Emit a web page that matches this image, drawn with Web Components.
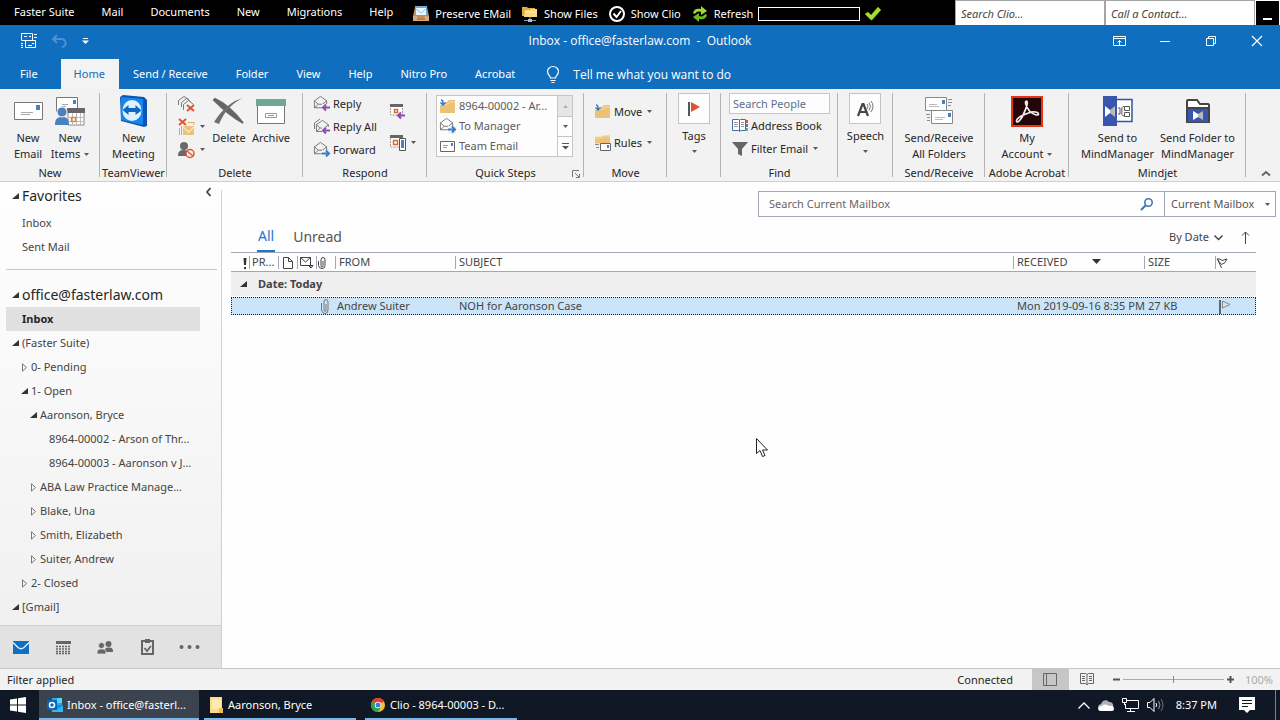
<!DOCTYPE html>
<html lang="en">
<head>
<meta charset="utf-8">
<title>Inbox - office@fasterlaw.com - Outlook</title>
<style>
html, body { height: 100%; margin: 0; }
body { font: 11px/16px "Noto Sans", "Open Sans", sans-serif; color: #262626; background: #fefefe; }
</style>
</head>
<body>
<mail-app></mail-app>
<script>
const shared = `
*, *::before, *::after { box-sizing: border-box; }
button, input, select { font: inherit; color: inherit; border: 0; margin: 0; padding: 0; background: none; border-radius: 0; outline: 0; white-space: nowrap; }
button { display: flex; align-items: center; }
input::placeholder { color: inherit; opacity: 1; }
a { color: inherit; text-decoration: none; }
`;
function define(name, css, html) {
  customElements.define(name, class extends HTMLElement {
    connectedCallback() {
      if (this.shadowRoot) return;
      const t = document.createElement('template');
      t.innerHTML = `<style>${shared}${css}</style>` + (typeof html === 'function' ? html(this) : html);
      this.attachShadow({ mode: 'open' }).append(document.importNode(t.content, true));
    }
  });
}

const flap = '<path d="M.5 5.500 7.500.500l7 5v8H.500zM.500 5.500l4.500 4h5l4.500-4M.500 13.500l4.500-4M14.500 13.500l-4.500-4" fill="none" stroke="#6a6a6a"/>';
const folder = '<path d="M0 3h7l2-2h6v13H0z" fill="#edc277"/><path d="M0 5h8l2-2h5" fill="none" stroke="#f8dca8"/>';
const icons = {
  tray: [16,16,'<path d="M2 1h12l2 9v5H0v-5z" fill="#c58b53"/><path d="M2 0h12v9H2z" fill="#6fa9d8"/><path d="M3 2h10v7H3z" fill="#eef6fc"/><path d="m3 3 5 4 5-4" fill="none" stroke="#8cc0ea"/><path d="M0 10h4l1 2h6l1-2h4v5H0z" fill="#dba873"/><path d="M4 13h8" stroke="#8a5a2d"/>'],
  showfiles: [16,16,'<path d="M0 1h5l1 1h7v8H0z" fill="#e3a93d"/><path d="M3 4h5l1-1h6v8H2z" fill="#ffd982"/><path d="M3 6h12" stroke="#fff0c4"/><path d="M8 11v3M2 14.500h12" stroke="#7f9fc0"/><path d="M6 13h4v3H6z" fill="#a8bfd8"/>'],
  clio: [16,16,'<circle cx="8" cy="8" r="7" fill="none" stroke="#fff" stroke-width="2"/><path d="m4.500 7.500 3 3.500 4.500-6" fill="none" stroke="#fff" stroke-width="2"/>'],
  refresh: [16,16,'<path d="M1 7c1-4 4-5 8-4V0l6 5-6 4V6C6 5 4 6 3 8z" fill="#9ddc2c"/><path d="M15 9c-1 4-4 5-8 4v3l-6-5 6-4v3c3 1 5 0 6-2z" fill="#72b81c"/>'],
  check: [16,14,'<path d="m0 7 3-2 3 3 7-8 3 3-9 10H6z" fill="#a4e02f" stroke="#5c9a12" stroke-width=".6"/>'],
  minus: [9,3,'<path d="M0 1h9v2H0z" fill="#fff"/>'],
  sr: [16,16,'<g fill="none" stroke="#fff"><path d="M.5.5h11v7H.5zM4.500 7.500h10v7h-10z" /><path d="M13 1.500h3M13 4.500h3M0 10.500h2M0 12.500h2M0 14.500h2M3 3.500h3M7 12.500h4"/></g><path d="M5 8h9v6H5z" fill="#106ebe"/><path d="M7 12.500h4M11 10.500h2M8 3.500h2" stroke="#fff"/>'],
  undo: [15,14,'<path d="M5 1 1 5l4 4M1 5h8c6 0 6 7 1 8" fill="none" stroke="#4a92d1" stroke-width="2"/>'],
  qat: [7,6,'<path d="M1 .5h5" stroke="#fff"/><path d="M0 2.500h7L3.500 6z" fill="#fff"/>'],
  ropts: [13,10,'<path d="M.5.5h12v9H.5zM.5 2.500h12M6.500 9V4.500M4.500 6.500l2-2 2 2" fill="none" stroke="#fff"/>'],
  min: [10,1,'<path d="M0 .5h10" stroke="#fff"/>'],
  restore: [10,10,'<path d="M.5 2.500h7v7h-7zM2.500 2.500v-2h7v7h-2" fill="none" stroke="#fff"/>'],
  close: [10,10,'<path d="m0 0 10 10M10 0 0 10" stroke="#fff" stroke-width="1.200"/>'],
  bulb: [12,17,'<path d="M3.500 12c0-2-3-3-3-6.500a5.500 5 0 0 1 11 0c0 3.500-3 4.500-3 6.500zM3.500 14.500h5M4.500 16.500h3" fill="none" stroke="#fff" stroke-width="1.200"/>'],
  newmail: [29,18,'<path d="M.5.5h28v17H.5z" fill="#fff" stroke="#777"/><path d="M22 3h4v5h-4z" fill="#4a80bd"/><path d="M7 10.500h12M7 12.500h9" stroke="#aaa"/>'],
  newitems: [30,29,'<path d="M1.500.5h21v14h-21z" fill="#fff" stroke="#777"/><path d="M18 3h3v4h-3z" fill="#4a80bd"/><path d="M7 7.500h6M7 9.500h4" stroke="#aaa"/><path d="M13 12h16v16H13z" fill="#fff" stroke="#888"/><path d="M12 11h18v5H12z" fill="#666"/><path d="M14 20.500h15M14 24.500h15M17.500 16v12M21.500 16v12M25.500 16v12" stroke="#bbb"/><path d="M16.500 20.500h4v4h-4z" fill="none" stroke="#e08a4a" stroke-width="1.500"/><path d="M0 28c0-7 3-8 7-8s7 1 7 8z" fill="#4a80bd"/><circle cx="7" cy="15" r="5" fill="#4a80bd" stroke="#f2f2f2"/>'],
  teamviewer: [27,32,'<path d="M0 2 3 0l21 2 3 3v26l-3 1L1 26z" fill="#0a55b5"/><path d="m1 2 22 2v26L1 25z" fill="#1686ee"/><ellipse cx="12" cy="15.500" rx="9.500" ry="10.500" fill="#dff1ff"/><path d="m2.500 15 6-5v3h7v-3l6 5.500-6 4.500v-3h-7v3z" fill="#0c68c8"/>'],
  ignore: [17,16,'<path d="M.5 9V4.500L6 .5l5 3M3.500 11V6.500l5-4 4 3M5.500 14V8.500l5-4 5 4" fill="none" stroke="#7a7a7a"/><path d="m9 9 7 6M16 9l-7 6" stroke="#e0562c" stroke-width="2"/>'],
  cleanup: [17,16,'<path d="M5 7h11v9H5z" fill="#edc277"/><path d="m5 8 5.500 5L16 8" fill="none" stroke="#fbe6bd" stroke-width="1.300"/><path d="M1.500 9v7M3.500 7v9M10 3.500h6V6" fill="none" stroke="#e0a95a"/><path d="m1 0 7 6M8 0 1 6" stroke="#e0562c" stroke-width="2"/>'],
  junk: [17,16,'<circle cx="6" cy="4" r="4" fill="#6a6a6a"/><path d="M0 14c0-5 2-6 6-6 3 0 4 1 4 2v4z" fill="#6a6a6a"/><circle cx="12" cy="11.500" r="4" fill="#f2f2f2" stroke="#e0562c" stroke-width="1.500"/><path d="m9 9 6 5" stroke="#e0562c" stroke-width="1.500"/>'],
  delete: [30,26,'<path d="M1 1c9 4 20 14 28 24C17 18 8 10 0 2z" fill="#666" stroke="#666" stroke-width="2"/><path d="M29 0C18 5 10 14 5 26L0 24C8 12 17 3 29 0z" fill="#6e6e6e"/>'],
  archive: [30,25,'<path d="M1.500 5.500h27v19h-27z" fill="#fff" stroke="#777"/><path d="M0 0h30v7H0z" fill="#6fa794"/><path d="M9.500 14.500h11v4h-11z" fill="none" stroke="#999"/><path d="M12 16.500h6" stroke="#999"/>'],
  reply: [16,16,`<g transform="scale(.87)">${flap}</g><path d="M8 8h8v8H8z" fill="#f2f2f2"/><path d="M9 11.500h7M12 8.500l-3 3 3 3" fill="none" stroke="#8c4fb0" stroke-width="2"/>`],
  replyall: [16,16,`<path d="M.5 10V4L6 0" fill="none" stroke="#777"/><g transform="translate(2 1) scale(.85)">${flap}</g><path d="M8 8h8v8H8z" fill="#f2f2f2"/><path d="M9 11.500h7M12 8.500l-3 3 3 3" fill="none" stroke="#8c4fb0" stroke-width="2"/>`],
  forward: [16,16,`<g transform="scale(.87)">${flap}</g><path d="M8 8h8v8H8z" fill="#f2f2f2"/><path d="M8 11.500h7M12 8.500l3 3-3 3" fill="none" stroke="#3f7cc0" stroke-width="2"/>`],
  meeting: [16,15,'<path d="M.5 1h12v10H.5z" fill="#fff" stroke="#999" stroke-dasharray="2 1"/><path d="M0 0h13v3H0z" fill="#666"/><path d="M4.500 5.500h3v3h-3z" fill="none" stroke="#e0662c" stroke-width="1.500"/><path d="M8 11.500h7M11 8.500l-3 3 3 3" fill="none" stroke="#8c4fb0" stroke-width="2"/>'],
  im: [16,16,'<path d="M.5 1h12v11H.5z" fill="#fff" stroke="#999" stroke-dasharray="2 1"/><path d="M0 0h13v3H0z" fill="#666"/><path d="M3.500 5.500h4v4h-4z" fill="none" stroke="#e0662c" stroke-width="1.500"/><path d="M9.500 3.500h6v12h-6z" fill="#fff" stroke="#555"/><path d="M11 5h3v8h-3z" fill="#4a80bd"/>'],
  movefolder: [16,15,`${folder}<path d="M0 0h5v6H0z" fill="#f7f7f7"/><path d="M1 1c2 0 2 1 2 5M.5 3.500 3 6l2.500-2.500" fill="none" stroke="#2f7cc2" stroke-width="1.500"/>`],
  rules: [16,16,`<g transform="scale(1 .6)">${folder}</g><path d="M5.500 8.500h10v7h-10z" fill="#fff" stroke="#666"/><path d="M12 10h2v3h-2z" fill="#4a80bd"/><path d="M0 9.500h4M1 12.500h3" stroke="#888"/>`],
  teammail: [15,11,'<path d="M.5.5h14v10H.5z" fill="#fff" stroke="#666"/><path d="M11 2h2v3h-2z" fill="#4a80bd"/><path d="M3 4.500h5M3 6.500h4" stroke="#999"/>'],
  flag: [12,14,'<path d="M1 0v14" stroke="#555" stroke-width="2"/><path d="m3 0 9 5-9 5z" fill="#dd5530"/>'],
  book: [16,14,'<path d="M0 1h14v11H0z" fill="#fff"/><path d="M.5.500h6q1 0 1 1 0-1 1-1h5v11h-5q-1 0-1 1 0-1-1-1h-6zM7.500 1v12" fill="none" stroke="#3f6fa8"/><path d="M2 3.500h4M2 5.500h4M2 7.500h4M9 3.500h3M9 5.500h3M9 7.500h3" stroke="#999"/><path d="M15 1v3" stroke="#dd5530" stroke-width="2"/><path d="M15 5v3" stroke="#4a80bd" stroke-width="2"/><path d="M15 9v3" stroke="#6fa794" stroke-width="2"/>'],
  filter: [16,14,'<path d="M0 0h16l-6 7v7l-4-2V7z" fill="#666"/>'],
  sound: [17,16,'<path d="m1 15 4.500-12h1L11 15M3 11h6" fill="none" stroke="#444" stroke-width="2.200"/><path d="M10 3q2 2 0 5M12 1.500q3 3.500 0 8M14 0q4 5 0 11" fill="none" stroke="#777"/>'],
  sendrecv: [28,28,'<path d="M.5.5h21v13H.5zM6.500 13.500h21v13h-21z" fill="#fff" stroke="#888"/><path d="M17 3h3v4h-3zM23 16h3v4h-3z" fill="#4a80bd"/><path d="M4 7.500h8M4 9.500h10M10 20.500h10M10 22.500h8" stroke="#bbb"/><path d="M23 2.500h4M23 5.500h4M23 8.500h3M1 17.500h4M2 20.500h3M2 23.500h3" stroke="#8a8a8a"/>'],
  acrobat: [32,31,'<path d="M1 1h30v29H1z" fill="#250608" stroke="#e63312" stroke-width="2"/><path d="M15.500 5c-2 0-1 5 3 10 4 4 9 5 9 3s-5-3-10-1c-6 2-12 5-12 8s5-1 7-7c3-6 5-13 3-13z" fill="none" stroke="#f3eeee" stroke-width="1.700"/>'],
  mindsend: [30,30,'<path d="M13 3.500h16v22H13z" fill="#fff" stroke="#3553a4" stroke-width="1.500"/><path d="M0 0h14v30H0z" fill="#3956ae"/><path d="m2 10 5 4v3l-5 4z" fill="#fff"/><path d="m12 10-5 4v3l5 4z" fill="#bbb"/><path d="M15 12h2v6h-2M21 10.500q-3 0-2 4.500-1 5 2 5M21.500 10.500h5v4h-5zM21.500 16.500h5v4h-5z" fill="none" stroke="#555"/>'],
  mindfolder: [24,25,'<path d="M1 23V2q0-1 1-1h9l3 4h8q1 0 1 1v17z" fill="#fff" stroke="#444" stroke-width="2"/><path d="M2 10h20v13H2z" fill="#3956ae"/><path d="M1 9h22" stroke="#444" stroke-width="2"/><path d="m7 12 5 3v3l-5 3z" fill="#fff"/><path d="m17 12-5 3v3l5 3z" fill="#bbb"/>'],
  caret: [5,3,'<path d="M0 0h5L2.500 3z" fill="#5a5a5a"/>'],
  caretup: [5,3,'<path d="M0 3h5L2.500 0z" fill="#b0b0b0"/>'],
  more: [7,7,'<path d="M0 .5h7" stroke="#555"/><path d="M0 3h7L3.500 6.500z" fill="#555"/>'],
  launch: [8,8,'<path d="M.5 7V.5H7M3 3l4 4M7.500 4v3.500H4" fill="none" stroke="#777"/>'],
  collapse: [8,5,'<path d="m0 4.500 4-3.500 4 3.500" fill="none" stroke="#666" stroke-width="2"/>'],
  left: [5,8,'<path d="M4.500 0 1 4l3.500 4" fill="none" stroke="#444" stroke-width="1.800"/>'],
  open: [7,6,'<path d="M7 0v6H0z" fill="#333"/>'],
  shut: [6,9,'<path d="m1.500.800 4 3.700-4 3.700z" fill="none" stroke="#777"/>'],
  search: [14,13,'<circle cx="8.500" cy="4.500" r="3.700" fill="none" stroke="#3c78b8" stroke-width="1.600"/><path d="M5.500 7.500 1 12" stroke="#3c78b8" stroke-width="2.200"/>'],
  chev: [9,5,'<path d="m.5.500 4 4 4-4" fill="none" stroke="#444" stroke-width="1.500"/>'],
  arrow: [9,13,'<path d="M4.500 13V1M1 4.500l3.500-3.500L8 4.500" fill="none" stroke="#444"/>'],
  sort: [9,5,'<path d="M0 0h9L4.500 5z" fill="#333"/>'],
  bang: [4,11,'<path d="M.5 0h3L3 7H1zM1 9h2v2H1z" fill="#333"/>'],
  doc: [10,12,'<path d="M.5.5h5l4 4v7h-9zM5.500.5v4h4" fill="none" stroke="#444"/>'],
  mailadd: [13,12,'<path d="M8 8.500H.5v-8h10V6M.5.500l5 4.500 5-4.500" fill="none" stroke="#444"/><path d="M8 8.500h5M10.500 6v3.500M8.500 8.500l2.500 2.500 2-2.500" fill="none" stroke="#333"/>'],
  clip: [8,12,'<path d="M5 4v4.500q0 1.500-1 1.500T3 8.500V3q0-2.500 2-2.500T7 3v5.500Q7 11.500 4 11.500T.5 8.500V4" fill="none" stroke="#444"/>'],
  bigclip: [8,15,'<path d="M5 5v6q0 1.500-1 1.500T3 11V3q0-2.500 2-2.500T7 3v8q0 3.500-3 3.500T.5 11V4" fill="none" stroke="#777"/>'],
  flaghead: [10,10,'<path d="M0 1h3l2 1.500L10 1 8 4.500 4.500 6.500zM.5 1 4.500 10" fill="none" stroke="#444"/>'],
  flagrow: [12,14,'<path d="M1 0v14" stroke="#666" stroke-width="2"/><path d="m3.500 1 7.500 3.500L3.500 8z" fill="none" stroke="#888"/>'],
  mail: [16,13,'<path d="M0 0h16v13H0z" fill="#0f6fc5"/><path d="m0 1.500 5 5q3 2.500 6 0l5-5" fill="none" stroke="#e9f3fb" stroke-width="1.300"/>'],
  calendar: [15,13,'<path d="M0 0h15v3H0z" fill="#666"/><path d="M0 5.500h15M0 8h15M0 10.500h15M0 12.500h15" stroke="#666" stroke-width="1.500" stroke-dasharray="2 1"/>'],
  people: [16,13,'<g fill="#666"><circle cx="11.500" cy="3" r="3"/><path d="M8 10c0-3 1-3.500 4-3.500s4 1 4 4.500H8z"/></g><g fill="#666" stroke="#e3e3e3" stroke-width=".8"><circle cx="4.500" cy="4.500" r="3"/><path d="M0 13c0-4 1-5 4.500-5S9 9 9 13z"/></g>'],
  tasks: [13,16,'<path d="M1 2h11v13H1z" fill="none" stroke="#666" stroke-width="2"/><path d="M4 0h5v4H4z" fill="#666"/><path d="m3.500 9 2.500 3 4-5" fill="none" stroke="#666" stroke-width="1.800"/>'],
  dots: [21,4,'<g fill="#666"><circle cx="2.500" cy="2" r="2"/><circle cx="10.500" cy="2" r="2"/><circle cx="18.500" cy="2" r="2"/></g>'],
  viewnormal: [14,13,'<path d="M.5.5h13v12H.5zM3.500 1v11" fill="none" stroke="#666"/>'],
  viewread: [14,13,'<path d="M.5.500h5l1.500 1 1.500-1h5v10h-5L7 12l-1.500-1.500h-5zM7 1.500V12" fill="none" stroke="#666"/><path d="M2 3.500h3M2 5.500h3M2 7.500h3M9 3.500h3M9 5.500h3M9 7.500h3" stroke="#666"/>'],
  zoomout: [7,3,'<path d="M0 1.500h7" stroke="#555" stroke-width="2"/>'],
  zoomin: [7,7,'<path d="M0 3.500h7M3.500 0v7" stroke="#555" stroke-width="2"/>'],
  windows: [16,16,'<path d="M0 2.500 7 1.500v6H0zM8 1.300 16 0v7.500H8zM0 8.500h7v6l-7-1zM8 8.500h8V16l-8-1.300z" fill="#fff"/>'],
  outlook: [16,16,'<path d="M5 1h10v13H5z" fill="#28a8ea"/><path d="M10 1h5v5h-5z" fill="#50d9ff"/><path d="M4 8h12v7H5z" fill="#1490df"/><path d="m5 9 6 3 5-3v6H5z" fill="#35b8f1"/><path d="M0 3h10v10H0z" fill="#0a64b8"/><circle cx="5" cy="8" r="2.500" fill="none" stroke="#fff" stroke-width="1.500"/>'],
  explorer: [13,16,'<path d="M0 0h12v16H0z" fill="#f9dc85"/><path d="M2 2h9v10H2z" fill="#fdeab0"/><path d="M9 11h4v5H9z" fill="#efc14c"/>'],
  chrome: [14,14,'<circle cx="7" cy="7" r="7" fill="#fbc116"/><path d="M7 7 .9 3.500A7 7 0 0 1 13.100 3.500z" fill="#e33b2e"/><path d="M7 7 .9 3.500A7 7 0 0 0 7 14l3-5z" fill="#2ba24c"/><circle cx="7" cy="7" r="3.300" fill="#fff"/><circle cx="7" cy="7" r="2.500" fill="#3f7fe8"/>'],
  traychev: [12,7,'<path d="m.5 6.500 5.500-5.500 5.500 5.500" fill="none" stroke="#fff" stroke-width="1.300"/>'],
  cloud: [16,11,'<path d="M3 10C-1 10-1 5 3 4c1-4 6-5 8-2 3 0 5 2 4 5z" fill="#aeb2b8"/><path d="M2 11c-3-1-2-5 2-5 2-3 6-1 7 0 3-1 5 0 5 3 0 1-1 2-2 2z" fill="#fff"/>'],
  network: [17,14,'<path d="M4.500 2.500h12v8H3.500V6M8.500 11v2M5 13.500h8" fill="none" stroke="#fff"/><path d="M.5.5h4v4h-4z" fill="#101825" stroke="#fff"/><path d="M2.500 4v3" stroke="#fff"/>'],
  volume: [17,14,'<path d="M.5 4.500H3l4-4v13l-4-4H.5z" fill="none" stroke="#fff"/><path d="M9 5q1.500 2 0 4" fill="none" stroke="#fff"/><path d="M11.500 3q3 4 0 8" fill="none" stroke="#9aa0a8"/><path d="M14 1q4 6 0 12" fill="none" stroke="#6a717c"/>'],
  notify: [16,16,'<path d="M0 0h16v13h-5l-3 3-3-3H0z" fill="#fff"/><path d="M3 3.500h10M3 6.500h10M3 9.500h6" stroke="#101825"/>'],
  pointer: [12,19,'<path d="M.5.5v15l3.500-3 2.500 6 2.500-1-2.500-5.500h5z" fill="#fff" stroke="#222"/>']
};
define('ui-icon', ':host{display:inline-flex;flex:none} svg{display:block;overflow:visible}', el => {
  const [w, h, body] = icons[el.getAttribute('name')];
  return `<svg width="${w}" height="${h}" viewBox="0 0 ${w} ${h}" aria-hidden="true">${body}</svg>`;
});

/* Suite launcher strip above the mail window */
define('suite-bar', `
:host{display:flex;height:25px;background:#000;color:#fff;flex:none}
nav{display:flex;padding-left:1px}
nav a{padding:4px 14px 0 13px}
.tools{display:flex;align-items:center;padding:2px 0 0 6px;gap:11px;flex:1}
.tools button{gap:6px}
.tools .state{display:flex;align-items:center;gap:5px;margin-left:-6px}
.state input{width:102px;height:14px;border:1px solid #fff}
.find{width:150px;height:25px;background:#fff;border:1px solid #a5a5a5;border-width:1px 1px 0;padding:0 5px;color:#444;font-style:italic}
.min{width:25px;justify-content:center;align-items:flex-end;border:1px solid #fff;border-width:1px 1px 0;padding-bottom:5px}`, `
<nav><a href="#">Faster Suite</a><a href="#">Mail</a><a href="#">Documents</a><a href="#">New</a><a href="#">Migrations</a><a href="#">Help</a></nav>
<div class="tools"><button><ui-icon name="tray"></ui-icon>Preserve EMail</button><button><ui-icon name="showfiles"></ui-icon>Show Files</button><button><ui-icon name="clio"></ui-icon>Show Clio</button><button><ui-icon name="refresh"></ui-icon>Refresh</button><span class="state"><input aria-label="Status"><ui-icon name="check"></ui-icon></span></div>
<input class="find" aria-label="Search Clio" placeholder="Search Clio..."><input class="find" aria-label="Call a Contact" placeholder="Call a Contact...">
<button class="min" aria-label="Minimize strip"><ui-icon name="minus"></ui-icon></button>`);

define('title-bar', `
:host{display:grid;grid-template-columns:1fr auto 1fr;height:32px;background:#106ebe;color:#fff;flex:none}
div{display:flex;align-items:center}
.qat{padding-left:21px;gap:15px}
.win{justify-content:flex-end}
.win button{width:46px;height:30px;justify-content:center}
h1{font:12px/32px "Open Sans",sans-serif;margin:0;white-space:pre}`, `
<div class="qat"><button aria-label="Send and receive"><ui-icon name="sr"></ui-icon></button><button aria-label="Undo"><ui-icon name="undo"></ui-icon></button><button aria-label="Customize"><ui-icon name="qat"></ui-icon></button></div>
<h1>Inbox - office@fasterlaw.com  -  Outlook</h1>
<div class="win"><button aria-label="Ribbon options"><ui-icon name="ropts"></ui-icon></button><button aria-label="Minimize"><ui-icon name="min"></ui-icon></button><button aria-label="Restore"><ui-icon name="restore"></ui-icon></button><button aria-label="Close"><ui-icon name="close"></ui-icon></button></div>`);

define('ribbon-tabs', `
:host{display:flex;height:32px;background:#106ebe;color:#fff;flex:none;padding:2px 0 0 6px}
a{padding:0 14px;line-height:30px}
.file{margin-right:9px}
.on{background:#f3f3f3;color:#106ebe;padding-left:13px}
.tell{gap:14px;margin-left:18px;font:12px "Open Sans",sans-serif}`, `
<a href="#" class="file">File</a><a href="#" class="on">Home</a><a href="#">Send / Receive</a><a href="#">Folder</a><a href="#">View</a><a href="#">Help</a><a href="#">Nitro Pro</a><a href="#">Acrobat</a><button class="tell"><ui-icon name="bulb"></ui-icon>Tell me what you want to do</button>`);

/* Ribbon building blocks */
define('ribbon-group', `
:host{display:flex;flex-direction:column;background:linear-gradient(#b4b4b4,#b4b4b4) no-repeat right 50% / 1px calc(100% - 8px);padding-top:3px;min-width:0}
.body{display:flex;flex:1;padding-left:var(--inset,0)}
:host([center]) .body{justify-content:center}
.label{display:flex;height:16px;justify-content:center;white-space:nowrap;position:relative}
ui-icon{position:absolute;right:4px;top:5px}`, el => `
<div class="body"><slot></slot></div><div class="label">${el.getAttribute('label') || ''}${el.hasAttribute('launch') ? '<ui-icon name="launch"></ui-icon>' : ''}</div>`);
define('big-button', `
:host{display:block}
button{flex-direction:column;width:100%;line-height:16px}
.pic{height:32px;display:flex;align-items:center;margin:3px 0}
.line{display:flex;align-items:center;gap:4px}
:host([boxed]) .pic{width:32px;height:31px;justify-content:center;background:#fdfdfd;border:1px solid #c4c4c4;margin:1px 0 4px}
:host([boxed]) ui-icon[name=caret]{margin-top:6px}`, el => {
  const lines = el.getAttribute('text').split('|');
  const menu = el.hasAttribute('menu') ? '<ui-icon name="caret"></ui-icon>' : '';
  return `<button><span class="pic"><ui-icon name="${el.getAttribute('icon')}"></ui-icon></span>${lines.map((l, i) => `<span class="line">${l}${i === lines.length - 1 && !el.hasAttribute('boxed') ? menu : ''}</span>`).join('')}${el.hasAttribute('boxed') ? menu : ''}</button>`;
});
define('small-button', `
:host{display:block}
button{height:23px;gap:3px}
ui-icon[name=caret]{margin-left:2px}`, el => `
<button aria-label="${el.textContent || el.getAttribute('icon')}"><ui-icon name="${el.getAttribute('icon')}"></ui-icon><slot></slot>${el.hasAttribute('menu') ? '<ui-icon name="caret"></ui-icon>' : ''}</button>`);
define('step-gallery', `
:host{display:grid;grid-template-columns:1fr 15px;width:137px;height:62px;margin-top:3px;background:#fdfdfd;border:1px solid #c6c6c6;color:#5c5c5c}
ul{list-style:none;margin:0;padding:0 0 0 3px}
li button{height:20px;gap:3px}
li ui-icon{width:16px}
.rail{display:grid;grid-template-rows:repeat(3,1fr)}
.rail button{justify-content:center;border-left:1px solid #c6c6c6}
.rail button + button{border-top:1px solid #c6c6c6}
.rail button:first-child{background:#e6e6e6}`, `
<ul><li><button><ui-icon name="movefolder"></ui-icon>8964-00002 - Ar...</button></li><li><button><ui-icon name="forward"></ui-icon>To Manager</button></li><li><button><ui-icon name="teammail"></ui-icon>Team Email</button></li></ul>
<div class="rail"><button aria-label="Previous"><ui-icon name="caretup"></ui-icon></button><button aria-label="Next"><ui-icon name="caret"></ui-icon></button><button aria-label="More"><ui-icon name="more"></ui-icon></button></div>`);
define('ribbon-bar', `
:host{display:grid;grid-template-columns:100px 67px 136px 124px 157px 83px 54px 117px 55px 92px 84px 177px 1fr;height:93px;flex:none;background:#f2f2f2;border-bottom:1px solid #cfcfcf}
.w42{width:42px}.w80{width:80px}
.col{display:flex;flex-direction:column}
.mid{justify-content:center;gap:8px;padding-bottom:3px}
.tools{width:30px}
.reply{width:76px}
.find{width:101px;height:21px;margin:1px 0 0 8px;border:1px solid #c6c6c6;background:#fdfdfd;padding:0 3px;color:#5c6f8c}
.pad{padding-left:11px}
.fold{align-self:end;justify-self:end;margin:0 10px 5px}`, `
<ribbon-group label="New" style="--inset:7px"><big-button class="w42" icon="newmail" text="New|Email"></big-button><big-button class="w42" icon="newitems" text="New|Items" menu></big-button></ribbon-group>
<ribbon-group label="TeamViewer" center><big-button icon="teamviewer" text="New|Meeting"></big-button></ribbon-group>
<ribbon-group label="Delete" style="--inset:11px"><div class="col tools"><small-button icon="ignore"></small-button><small-button icon="cleanup" menu></small-button><small-button icon="junk" menu></small-button></div><big-button class="w42" icon="delete" text="Delete"></big-button><big-button class="w42" icon="archive" text="Archive"></big-button></ribbon-group>
<ribbon-group label="Respond" style="--inset:11px"><div class="col reply"><small-button icon="reply">Reply</small-button><small-button icon="replyall">Reply All</small-button><small-button icon="forward">Forward</small-button></div><div class="col mid"><small-button icon="meeting"></small-button><small-button icon="im" menu></small-button></div></ribbon-group>
<ribbon-group label="Quick Steps" launch style="--inset:9px"><step-gallery></step-gallery></ribbon-group>
<ribbon-group label="Move" style="--inset:11px"><div class="col mid"><small-button icon="movefolder" menu>Move</small-button><small-button icon="rules" menu>Rules</small-button></div></ribbon-group>
<ribbon-group center><big-button boxed icon="flag" text="Tags" menu></big-button></ribbon-group>
<ribbon-group label="Find"><div class="col"><input class="find" placeholder="Search People" aria-label="Search People"><small-button class="pad" icon="book">Address Book</small-button><small-button class="pad" icon="filter" menu>Filter Email</small-button></div></ribbon-group>
<ribbon-group center><big-button boxed icon="sound" text="Speech" menu></big-button></ribbon-group>
<ribbon-group label="Send/Receive" center><big-button icon="sendrecv" text="Send/Receive|All Folders"></big-button></ribbon-group>
<ribbon-group label="Adobe Acrobat" center><big-button icon="acrobat" text="My|Account" menu></big-button></ribbon-group>
<ribbon-group label="Mindjet" center><big-button class="w80" icon="mindsend" text="Send to|MindManager"></big-button><big-button class="w80" icon="mindfolder" text="Send Folder to|MindManager"></big-button></ribbon-group>
<button class="fold" aria-label="Collapse ribbon"><ui-icon name="collapse"></ui-icon></button>`);

/* Folder tree */
define('folder-row', `
:host{display:block;margin:0 21px 0 6px;color:#444}
a{display:flex;align-items:center;height:24px;padding-left:calc(var(--level,0) * 9px + 6px);white-space:nowrap}
.twist{width:10px;display:flex;flex:none}
:host([head]) a{font-size:14px;color:#262626}
:host([current]){background:#e0e0e0;font-weight:bold}
:host([current]) a{color:#262626}`, el => `
<a href="#"><span class="twist">${el.hasAttribute('state') ? `<ui-icon name="${el.getAttribute('state')}"></ui-icon>` : ''}</span><slot></slot></a>`);
define('folder-pane', `
:host{display:flex;flex-direction:column;width:222px;flex:none;background:linear-gradient(#d0d0d0,#d0d0d0) no-repeat right 8px / 1px 100%,linear-gradient(#fefefe,#fcfcfc 18%,#efefef);padding-right:1px}
.top{position:relative;padding:2px 0 10px;border-bottom:1px solid #c8c8c8;margin:0 4px 13px 6px}
.top folder-row{margin-left:0}
.top folder-row[head]{margin-bottom:3px}
.top button{position:absolute;right:6px;top:6px}
.tree{flex:1}
nav{display:flex;height:43px;background:#e2e2e2;border-top:1px solid #cfcfcf}
nav button{width:42px;justify-content:center}`, `
<div class="top"><folder-row head state="open">Favorites</folder-row><folder-row>Inbox</folder-row><folder-row>Sent Mail</folder-row><button aria-label="Minimize pane"><ui-icon name="left"></ui-icon></button></div>
<div class="tree"><folder-row head state="open">office@fasterlaw.com</folder-row><folder-row current>Inbox</folder-row><folder-row state="open">(Faster Suite)</folder-row><folder-row style="--level:1" state="shut">0- Pending</folder-row><folder-row style="--level:1" state="open">1- Open</folder-row><folder-row style="--level:2" state="open">Aaronson, Bryce</folder-row><folder-row style="--level:3">8964-00002 - Arson of Thr...</folder-row><folder-row style="--level:3">8964-00003 - Aaronson v J...</folder-row><folder-row style="--level:2" state="shut">ABA Law Practice Manage...</folder-row><folder-row style="--level:2" state="shut">Blake, Una</folder-row><folder-row style="--level:2" state="shut">Smith, Elizabeth</folder-row><folder-row style="--level:2" state="shut">Suiter, Andrew</folder-row><folder-row style="--level:1" state="shut">2- Closed</folder-row><folder-row state="open">[Gmail]</folder-row></div>
<nav><button aria-label="Mail"><ui-icon name="mail"></ui-icon></button><button aria-label="Calendar"><ui-icon name="calendar"></ui-icon></button><button aria-label="People"><ui-icon name="people"></ui-icon></button><button aria-label="Tasks"><ui-icon name="tasks"></ui-icon></button><button aria-label="More"><ui-icon name="dots"></ui-icon></button></nav>`);

define('mail-list', `
:host{display:block;flex:1;min-width:0;background:#fefefe;color:#444;padding:9px 4px 0 9px}
.search{display:grid;grid-template-columns:1fr 111px;width:518px;margin-left:auto;height:26px;border:1px solid #a0a7b8}
.box{display:flex;align-items:center;padding:0 10px}
.box input{flex:1;color:#666}
.scope{display:flex;align-items:center;border-left:1px solid #a0a7b8;padding-right:5px}
select{appearance:none;flex:1;padding-left:6px;color:#555}
.bar{display:flex;align-items:stretch;height:35px;padding:0 26px;gap:18px}
.bar button{font-size:14px;padding-top:5px;color:#555}
.bar .on{color:#1a78c8;border-bottom:2px solid #1a78c8;padding:5px 1px 0}
.bar .by{font-size:11px;gap:5px;margin-left:auto;color:#444}
.wrap{padding-right:20px}
table{width:100%;table-layout:fixed;border-collapse:collapse;border-top:1px solid #a0a7b8}
th,td{padding:0 0 0 4px;text-align:left;font-weight:normal;white-space:nowrap}
thead tr{border-bottom:1px solid #a0a7b8}
th{height:19px}
th ui-icon{vertical-align:middle}
thead th + th{background:linear-gradient(#a0a7b8,#a0a7b8) no-repeat 0 50% / 1px 13px}
thead .c{padding:0;text-align:center}
.sort{float:right;margin:5px 43px 0 0}
.group th{height:25px;background:#efefef;font-weight:bold;padding:0 9px;border-bottom:1px solid #fefefe}
.group ui-icon{margin-right:11px;vertical-align:1px}
.msg td{height:18px;background:#cce4f7}
.msg{outline:1px dotted #222;outline-offset:-1px}
.msg .icon{padding:0 6px 0 0;text-align:right}
td ui-icon{vertical-align:middle}`, `
<div class="search"><div class="box"><input aria-label="Search Current Mailbox" placeholder="Search Current Mailbox"><ui-icon name="search"></ui-icon></div><div class="scope"><select aria-label="Scope"><option>Current Mailbox</option></select><ui-icon name="caret"></ui-icon></div></div>
<div class="bar"><button class="on">All</button><button>Unread</button><button class="by">By Date<ui-icon name="chev"></ui-icon></button><button aria-label="Reverse order"><ui-icon name="arrow"></ui-icon></button></div>
<div class="wrap"><table>
<colgroup><col style="width:18px"><col style="width:29px"><col style="width:19px"><col style="width:19px"><col style="width:19px"><col style="width:120px"><col><col style="width:131px"><col style="width:71px"><col style="width:41px"></colgroup>
<thead><tr><th style="text-align:right;padding:0 2px 0 0" aria-label="Importance"><ui-icon name="bang"></ui-icon></th><th style="padding-left:3px">PR...</th><th class="c" aria-label="Icon"><ui-icon name="doc"></ui-icon></th><th class="c" aria-label="Message"><ui-icon name="mailadd"></ui-icon></th><th aria-label="Attachment" style="padding-left:2px"><ui-icon name="clip"></ui-icon></th><th>FROM</th><th>SUBJECT</th><th>RECEIVED<ui-icon class="sort" name="sort"></ui-icon></th><th>SIZE</th><th aria-label="Flag" style="padding-left:2px"><ui-icon name="flaghead"></ui-icon></th></tr></thead>
<tbody><tr class="group"><th colspan="10"><ui-icon name="open"></ui-icon>Date: Today</th></tr>
<tr class="msg"><td></td><td></td><td></td><td></td><td class="icon"><ui-icon name="bigclip"></ui-icon></td><td style="padding-left:2px">Andrew Suiter</td><td>NOH for Aaronson Case</td><td>Mon 2019-09-16 8:35 PM</td><td>27 KB</td><td><ui-icon name="flagrow"></ui-icon></td></tr></tbody></table></div>`);

define('status-bar', `
:host{display:flex;align-items:center;height:22px;flex:none;background:#f2f2f2;border-top:1px solid #c6c6c6;padding:0 7px}
.left{flex:1}
.view{width:37px;height:21px;justify-content:center}
.on{background:#c6c6c6}
.conn{margin-right:19px}
.zoom{display:flex;align-items:center;gap:3px;margin:0 11px 0 7px}
input{appearance:none;width:101px;height:12px;background:linear-gradient(#999,#999) no-repeat 50% 50% / 1px 7px,linear-gradient(#aaa,#aaa) no-repeat 0 50% / 100% 1px}
input::-webkit-slider-thumb{appearance:none;width:1px;height:7px;background:#888}
.pct{color:#aaa}`, `
<span class="left">Filter applied</span><span class="conn">Connected</span><button class="view on" aria-label="Normal view"><ui-icon name="viewnormal"></ui-icon></button><button class="view" aria-label="Reading view"><ui-icon name="viewread"></ui-icon></button>
<span class="zoom"><button aria-label="Zoom out"><ui-icon name="zoomout"></ui-icon></button><input type="range" aria-label="Zoom"><button aria-label="Zoom in"><ui-icon name="zoomin"></ui-icon></button></span><span class="pct">100%</span>`);

define('task-button', `
:host{display:block;width:152px;height:30px;border-bottom:2px solid #76b9ed}
:host([active]){width:160px;background:#3b434f}
button{height:28px;gap:5px;padding:2px 0 0 6px}
:host([active]) button{padding-left:8px;gap:4px}`, el => `<button><ui-icon name="${el.getAttribute('icon')}"></ui-icon><slot></slot></button>`);
define('task-bar', `
:host{display:flex;align-items:center;height:30px;flex:none;background:#101825;color:#fff}
.start{width:39px;height:30px;padding-left:10px}
.run{display:grid;grid-template-columns:165px 161px 152px;flex:1}
.tray{display:flex;align-items:center;gap:8px}
.time{margin:0 14px 0 4px}
.peek{width:5px;height:30px;border-left:1px solid #7d828b;margin-left:12px}`, `
<button class="start" aria-label="Start"><ui-icon name="windows"></ui-icon></button>
<div class="run"><task-button active icon="outlook">Inbox - office@fasterl...</task-button><task-button icon="explorer">Aaronson, Bryce</task-button><task-button icon="chrome">Clio - 8964-00003 - D...</task-button></div>
<div class="tray"><ui-icon name="traychev"></ui-icon><ui-icon name="cloud"></ui-icon><ui-icon name="network"></ui-icon><ui-icon name="volume"></ui-icon><time class="time">8:37 PM</time><ui-icon name="notify"></ui-icon><span class="peek"></span></div>`);

define('mail-app', `
:host{display:flex;flex-direction:column;min-height:100vh;position:relative}
main{display:flex;flex:1}
.pointer{position:absolute;left:756px;top:438px}`, `
<suite-bar></suite-bar><title-bar></title-bar><ribbon-tabs></ribbon-tabs><ribbon-bar></ribbon-bar>
<main><folder-pane></folder-pane><mail-list></mail-list></main>
<status-bar></status-bar><task-bar></task-bar><ui-icon class="pointer" name="pointer"></ui-icon>`);
</script>
</body>
</html>
